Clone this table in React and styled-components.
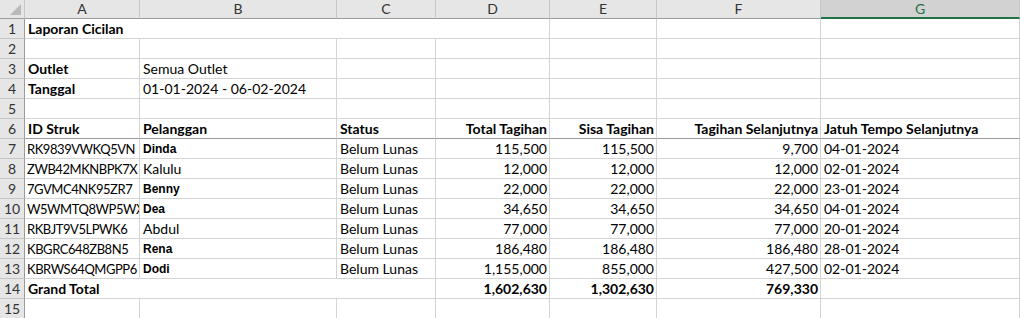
import React from "react";
import styled, { createGlobalStyle, css } from "styled-components";

const GlobalStyle = createGlobalStyle`
  html, body {
    margin: 0;
    padding: 0;
    background: #ffffff;
  }
  body {
    font-family: Lato, "Open Sans", sans-serif;
    overflow: hidden;
  }
`;

const COLS = [
  { key: "A", width: 115 },
  { key: "B", width: 197 },
  { key: "C", width: 99 },
  { key: "D", width: 114 },
  { key: "E", width: 107 },
  { key: "F", width: 164 },
  { key: "G", width: 199 },
];

const Sheet = styled.div`
  display: grid;
  grid-template-columns: 25px ${COLS.map((c) => `${c.width}px`).join(" ")};
  grid-auto-rows: 20px;
  grid-template-rows: 19px;
  width: 1020px;
  height: 318px;
  overflow: hidden;
  font-size: 14px;
  color: #000;
`;

const Corner = styled.div`
  position: relative;
  background: #e6e6e6;
  border-right: 1px solid #c6c6c6;
  border-bottom: 1px solid #9b9b9b;
  box-sizing: border-box;

  &::after {
    content: "";
    position: absolute;
    right: 3px;
    bottom: 3px;
    width: 0;
    height: 0;
    border-left: 11px solid transparent;
    border-bottom: 11px solid #b9b9b9;
  }
`;

const ColHead = styled.div`
  box-sizing: border-box;
  background: ${(p) => (p.$active ? "#d2d2d2" : "#e6e6e6")};
  color: ${(p) => (p.$active ? "#217346" : "#333")};
  border-right: 1px solid #c6c6c6;
  border-bottom: ${(p) => (p.$active ? "2px solid #217346" : "1px solid #9b9b9b")};
  text-align: center;
  font-size: 14px;
  line-height: 18px;
`;

const RowHead = styled.div`
  box-sizing: border-box;
  background: #e6e6e6;
  color: #333;
  border-right: 1px solid #9b9b9b;
  border-bottom: 1px solid #c6c6c6;
  text-align: center;
  font-size: 14px;
  line-height: 20px;
`;

const Cell = styled.div`
  box-sizing: border-box;
  grid-column: span ${(p) => p.$span || 1};
  padding: 0 2px 0 3px;
  border-right: 1px solid #d4d4d4;
  border-bottom: 1px solid ${(p) => (p.$rule ? "#9a9a9a" : "#d4d4d4")};
  line-height: 20px;
  white-space: nowrap;
  overflow: hidden;
  text-align: ${(p) => p.$align || "left"};
  font-weight: ${(p) => (p.$bold ? 700 : 400)};

  ${(p) =>
    p.$code &&
    css`
      padding-left: 2px;
      font-size: 13px;
      letter-spacing: -0.45px;
    `}

  ${(p) =>
    p.$alt &&
    css`
      font-family: "Liberation Sans", Arial, sans-serif;
      font-size: 12px;
      font-weight: 700;
    `}
`;

const payments = [
  ["RK9839VWKQ5VN", "Dinda", true, "115,500", "115,500", "9,700", "04-01-2024"],
  ["ZWB42MKNBPK7X", "Kalulu", false, "12,000", "12,000", "12,000", "02-01-2024"],
  ["7GVMC4NK95ZR7", "Benny", true, "22,000", "22,000", "22,000", "23-01-2024"],
  ["W5WMTQ8WP5WX", "Dea", true, "34,650", "34,650", "34,650", "04-01-2024"],
  ["RKBJT9V5LPWK6", "Abdul", false, "77,000", "77,000", "77,000", "20-01-2024"],
  ["KBGRC648ZB8N5", "Rena", true, "186,480", "186,480", "186,480", "28-01-2024"],
  ["KBRWS64QMGPP6", "Dodi", true, "1,155,000", "855,000", "427,500", "02-01-2024"],
];

const Blank = ({ n }) =>
  Array.from({ length: n }, (_, i) => <Cell key={`b${i}`} />);

const Row = ({ num, children }) => (
  <>
    <RowHead>{num}</RowHead>
    {children}
  </>
);

export default function App() {
  return (
    <>
      <GlobalStyle />
      <Sheet>
        <Corner />
        {COLS.map((c) => (
          <ColHead key={c.key} $active={c.key === "G"}>
            {c.key}
          </ColHead>
        ))}

        <Row num={1}>
          <Cell $span={4} $bold>
            Laporan Cicilan
          </Cell>
          <Blank n={3} />
        </Row>

        <Row num={2}>
          <Blank n={7} />
        </Row>

        <Row num={3}>
          <Cell $bold>Outlet</Cell>
          <Cell>Semua Outlet</Cell>
          <Blank n={5} />
        </Row>

        <Row num={4}>
          <Cell $bold>Tanggal</Cell>
          <Cell>01-01-2024 - 06-02-2024</Cell>
          <Blank n={5} />
        </Row>

        <Row num={5}>
          <Blank n={7} />
        </Row>

        <Row num={6}>
          <Cell $bold $rule>ID Struk</Cell>
          <Cell $bold $rule>Pelanggan</Cell>
          <Cell $bold $rule>Status</Cell>
          <Cell $bold $rule $align="right">Total Tagihan</Cell>
          <Cell $bold $rule $align="right">Sisa Tagihan</Cell>
          <Cell $bold $rule $align="right">Tagihan Selanjutnya</Cell>
          <Cell $bold $rule>Jatuh Tempo Selanjutnya</Cell>
        </Row>

        {payments.map(([id, name, alt, total, rest, next, due], i) => (
          <Row key={id} num={7 + i}>
            <Cell $code>{id}</Cell>
            <Cell $alt={alt}>{name}</Cell>
            <Cell>Belum Lunas</Cell>
            <Cell $align="right">{total}</Cell>
            <Cell $align="right">{rest}</Cell>
            <Cell $align="right">{next}</Cell>
            <Cell>{due}</Cell>
          </Row>
        ))}

        <Row num={14}>
          <Cell $span={3} $bold>
            Grand Total
          </Cell>
          <Cell $bold $align="right">1,602,630</Cell>
          <Cell $bold $align="right">1,302,630</Cell>
          <Cell $bold $align="right">769,330</Cell>
          <Cell />
        </Row>

        <Row num={15}>
          <Blank n={7} />
        </Row>
      </Sheet>
    </>
  );
}
